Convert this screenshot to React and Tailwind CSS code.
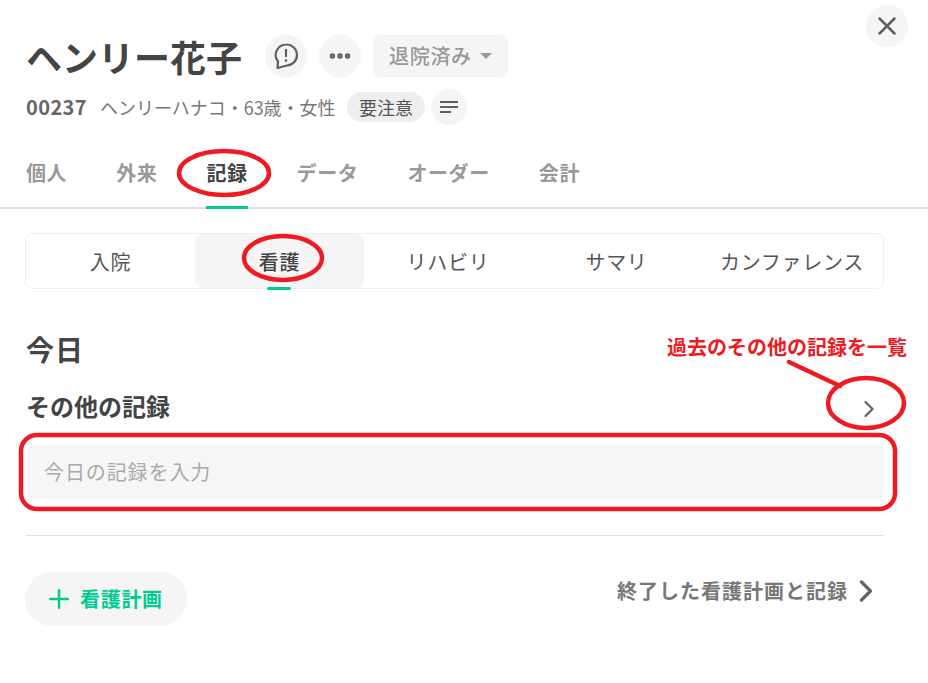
import { ChevronRight, Plus, X, MoreHorizontal } from 'lucide-react'

const mainTabs = ['個人', '外来', '記録', 'データ', 'オーダー', '会計']
const subTabs = ['入院', '看護', 'リハビリ', 'サマリ', 'カンファレンス']

function CommentIcon() {
  return (
    <svg width="24" height="24" viewBox="0 0 24 24" fill="none" stroke="#5f5f5f" strokeWidth="2.2" className="overflow-visible">
      <path d="M12 .5a10.500 10.500 0 0 1 1 21L3.500 24 4 17.500A10.500 10.500 0 0 1 12 .5z" strokeLinejoin="round" />
      <path d="M12 5v8M12 15.200v2.600" />
    </svg>
  )
}

function ListIcon() {
  return (
    <svg width="18" height="14" viewBox="0 0 18 14" fill="none" stroke="#5f5f5f" strokeWidth="2">
      <path d="M0 2h18M0 7h18M0 12h11" />
    </svg>
  )
}

// red marks drawn by hand on top of the screenshot
function Annotations() {
  return (
    <>
      <svg className="absolute left-0 top-0" width="928" height="683" fill="none" stroke="#ed1c24" strokeWidth="4.5">
        <ellipse cx="224" cy="173" rx="45" ry="22" />
        <ellipse cx="283" cy="258" rx="39" ry="22" />
        <ellipse cx="866" cy="403" rx="38" ry="25" />
        <path d="M789 362 L840 386" strokeLinecap="round" />
        <rect x="21" y="435" width="874" height="74" rx="16" />
      </svg>
      <span className="absolute left-[667px] top-[333px] text-[20px] leading-[28px] font-bold text-[#ed1c24]">
        過去のその他の記録を一覧
      </span>
    </>
  )
}

export default function App() {
  return (
    <div className="relative h-[683px] w-[928px] overflow-hidden bg-white text-[#444444] font-['Noto_Sans_CJK_JP','Noto_Sans',sans-serif]">
      <div className="flex justify-end pr-[20px] pt-[5px]">
        <button type="button" className="flex h-[42px] w-[42px] items-center justify-center rounded-full bg-[#f5f5f5]">
          <X size={30} strokeWidth={2} color="#5f5f5f" />
        </button>
      </div>

      <div className="mt-[-12px] flex items-center pl-[26px]">
        <h1 className="w-[239px] text-[36px] leading-[42px] font-bold">ヘンリー花子</h1>
        <button type="button" className="flex h-[42px] w-[42px] items-center justify-center rounded-full bg-[#f5f5f5]">
          <CommentIcon />
        </button>
        <button type="button" className="ml-[12px] flex h-[42px] w-[42px] items-center justify-center rounded-full bg-[#f5f5f5]">
          <MoreHorizontal size={26} strokeWidth={3} color="#5f5f5f" />
        </button>
        <button type="button" className="ml-[12px] flex h-[42px] w-[135px] items-center gap-[8px] rounded-lg bg-[#f5f5f5] pl-[16px] text-[20px] font-medium tracking-[0.7px] text-[#999999]">
          退院済み
          <span className="h-0 w-0 border-x-[6px] border-t-[6px] border-x-transparent border-t-[#999999]" />
        </button>
      </div>

      <div className="mt-[12px] flex h-[36px] items-center pl-[26px]">
        <span className="w-[74px] text-[20px] font-bold tracking-[0.4px] text-[#666666]">00237</span>
        <span className="w-[247px] text-[18px] text-[#777777]">ヘンリーハナコ・63歳・女性</span>
        <span className="flex h-[30px] w-[78px] items-center justify-center rounded-full bg-[#eeeeee] text-[18px] text-[#555555]">要注意</span>
        <button type="button" className="ml-[6px] flex h-[36px] w-[36px] items-center justify-center rounded-full bg-[#f5f5f5]">
          <ListIcon />
        </button>
      </div>

      <div className="mt-[20px] flex h-[64px] gap-[49px] border-b-2 border-[#e0e0e0] pl-[26px]">
        {mainTabs.map((tab) => (
          <div
            key={tab}
            className={`-mb-[2px] pt-[13px] text-[20px] leading-[30px] font-bold tracking-[0.6px] ${
              tab === '記録' ? 'border-b-[3px] border-[#00cc8f] text-[#444444]' : 'text-[#999999]'
            }`}
          >
            {tab}
          </div>
        ))}
      </div>

      <div className="ml-[25px] mr-[44px] mt-[24px] grid h-[56px] grid-cols-[169px_169px_168px_169px_1fr] rounded-lg border border-[#eeeeee]">
        {subTabs.map((tab) => (
          <div
            key={tab}
            className={`relative flex items-center justify-center pt-[2px] text-[20px] tracking-[0.7px] ${
              tab === '看護' ? 'rounded-lg bg-[#f5f5f5] font-medium text-[#444444]' : 'text-[#555555]'
            }`}
          >
            {tab}
            {tab === '看護' && <span className="absolute bottom-[-2px] left-[72px] h-[3px] w-[24px] rounded-sm bg-[#00cc8f]" />}
          </div>
        ))}
      </div>

      <div className="mx-[26px] mt-[40px] w-[858px]">
        <h2 className="text-[28px] leading-[40px] font-bold tracking-[1px]">今日</h2>
        <div className="mt-[13px] flex h-[48px] items-center justify-between">
          <h3 className="text-[24px] leading-[36px] font-bold">その他の記録</h3>
          <ChevronRight size={28} strokeWidth={2} color="#666666" className="mr-[1px] mt-[5px]" />
        </div>
        <div className="mt-[15px] flex h-[54px] items-center rounded-lg bg-[#f6f6f6] pl-[18px] text-[20px] tracking-[0.9px] text-[#aaaaaa]">
          今日の記録を入力
        </div>
        <div className="mt-[36px] border-t border-[#e0e0e0]" />
        <div className="mt-[36px] ml-[-1px] flex items-start justify-between">
          <button type="button" className="flex h-[54px] w-[162px] items-center gap-[6px] rounded-full bg-[#f5f5f5] pl-[19px] text-[20px] font-bold tracking-[0.7px] text-[#00cc8f]">
            <Plus size={30} strokeWidth={2} />
            看護計画
          </button>
          <div className="mt-[1px] flex items-center text-[20px] leading-[34px] font-bold tracking-[1px] text-[#777777]">
            終了した看護計画と記録
            <ChevronRight size={36} strokeWidth={2.2} color="#666666" />
          </div>
        </div>
      </div>

      <Annotations />
    </div>
  )
}
